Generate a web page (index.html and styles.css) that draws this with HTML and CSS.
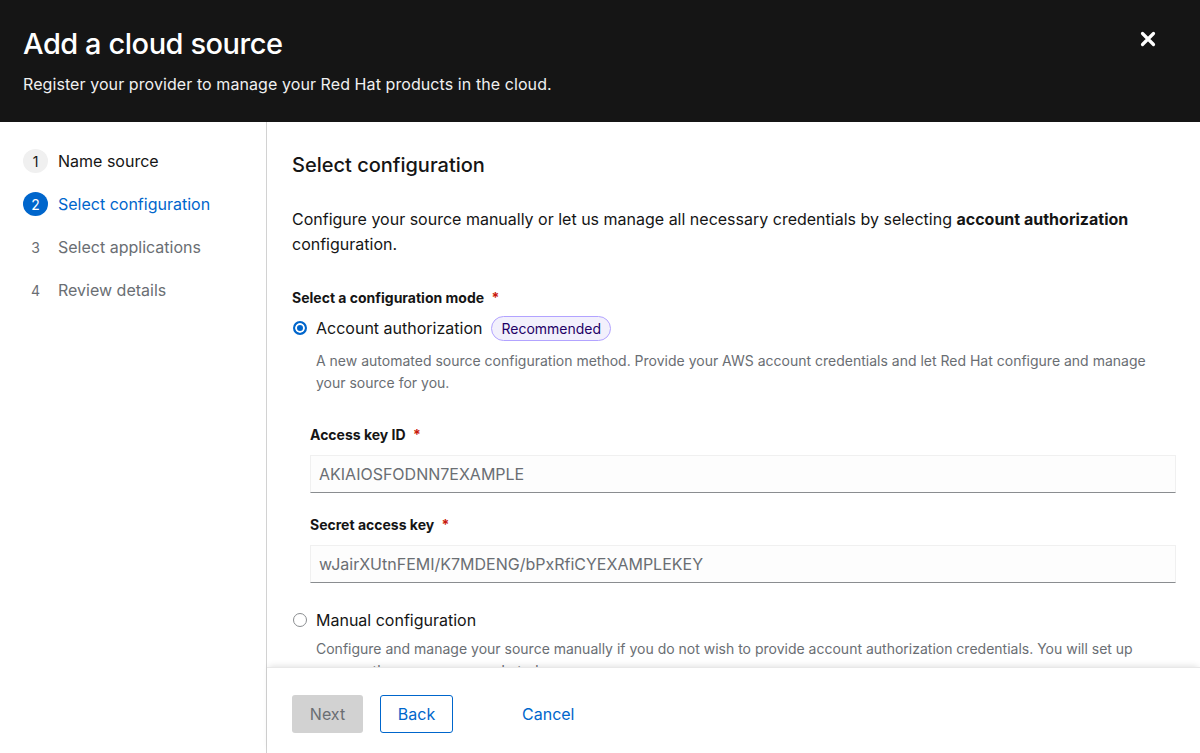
FILE: index.html
```html
<!DOCTYPE html>
<html lang="en">
<head>
<meta charset="utf-8">
<title>Add a cloud source</title>
<link rel="stylesheet" href="styles.css">
</head>
<body>
<div class="modal">
  <header class="modal-header">
    <div class="header-text">
      <h1 class="title">Add a cloud source</h1>
      <p class="subtitle">Register your provider to manage your Red Hat products in the cloud.</p>
    </div>
    <button class="close" aria-label="Close">
      <svg width="16" height="16" viewBox="0 0 16 16"><path d="M2.5 2.5 L13.5 13.5 M13.5 2.5 L2.5 13.5" stroke="#fff" stroke-width="3.2" stroke-linecap="round"/></svg>
    </button>
  </header>
  <div class="modal-body">
    <nav class="steps">
      <div class="step done"><span class="num">1</span><span class="label">Name source</span></div>
      <div class="step current"><span class="num">2</span><span class="label">Select configuration</span></div>
      <div class="step"><span class="num">3</span><span class="label">Select applications</span></div>
      <div class="step"><span class="num">4</span><span class="label">Review details</span></div>
    </nav>
    <div class="main">
      <div class="content">
        <h2 class="heading">Select configuration</h2>
        <p class="intro">Configure your source manually or let us manage all necessary credentials by selecting <b>account authorization</b> configuration.</p>
        <div class="group-label">Select a configuration mode <span class="req">*</span></div>
        <div class="radio-row">
          <span class="radio checked"></span>
          <span class="radio-label">Account authorization</span>
          <span class="badge">Recommended</span>
        </div>
        <p class="radio-desc">A new automated source configuration method. Provide your AWS account credentials and let Red Hat configure and manage your source for you.</p>
        <div class="fields">
          <div class="field-label">Access key ID <span class="req">*</span></div>
          <div class="input">AKIAIOSFODNN7EXAMPLE</div>
          <div class="field-label second">Secret access key <span class="req">*</span></div>
          <div class="input">wJairXUtnFEMI/K7MDENG/bPxRfiCYEXAMPLEKEY</div>
        </div>
        <div class="radio-row manual">
          <span class="radio"></span>
          <span class="radio-label">Manual configuration</span>
        </div>
        <p class="radio-desc">Configure and manage your source manually if you do not wish to provide account authorization credentials. You will set up sources the same way you do today.</p>
      </div>
      <footer class="footer">
        <button class="btn next">Next</button>
        <button class="btn back">Back</button>
        <button class="btn link">Cancel</button>
      </footer>
    </div>
  </div>
</div>
</body>
</html>
```

FILE: styles.css
```css
* { box-sizing: border-box; }
html, body { margin: 0; padding: 0; }
body {
  width: 1200px;
  height: 753px;
  overflow: hidden;
  font-family: "Inter", "Noto Sans", sans-serif;
  color: #151515;
  background: #fff;
}
.modal { display: flex; flex-direction: column; height: 753px; }
.modal-header {
  background: #151515;
  color: #fff;
  height: 122px;
  flex: none;
  display: flex;
  justify-content: space-between;
  align-items: flex-start;
  padding: 28px 44px 0 23px;
}
.title {
  margin: 0;
  font-size: 29px;
  font-weight: 500;
  line-height: 32px;
  letter-spacing: -0.45px;
}
.subtitle {
  margin: 13px 0 0;
  font-size: 16px;
  line-height: 22px;
  color: #f0f0f0;
  letter-spacing: 0.08px;
}
.close {
  background: none;
  border: 0;
  padding: 0;
  margin-top: 3px;
  width: 16px;
  height: 16px;
  display: flex;
}
.modal-body { flex: 1; display: flex; min-height: 0; }
.steps {
  width: 267px;
  flex: none;
  border-right: 1px solid #d2d2d2;
  padding: 27px 0 0 23px;
  display: flex;
  flex-direction: column;
  gap: 19px;
}
.step { display: flex; align-items: center; gap: 10px; font-size: 16px; color: #6a6e73; height: 24px; }
.step .num {
  width: 25px; height: 24px; border-radius: 50%;
  display: flex; align-items: center; justify-content: center;
  font-size: 14px; color: #6a6e73;
}
.step.done .num { background: #f0f0f0; color: #151515; }
.step.done .label { color: #151515; }
.step.current .num { background: #0066cc; color: #fff; }
.step.current .label { color: #0066cc; }
.main { flex: 1; display: flex; flex-direction: column; min-width: 0; }
.content {
  flex: 1;
  overflow: hidden;
  padding: 31px 24px 0 25px;
}
.heading { margin: 0; font-size: 20px; font-weight: 500; line-height: 24px; }
.intro { margin: 30px 0 0; font-size: 16px; line-height: 25px; }
.intro b { font-weight: 700; }
.group-label { margin-top: 31px; font-size: 14px; font-weight: 700; line-height: 20px; }
.req { color: #c9190b; margin-left: 4px; }
.radio-row { display: flex; align-items: center; height: 26px; margin-top: 7px; }
.radio {
  width: 14px; height: 14px; border-radius: 50%;
  border: 1px solid #8a8d90;
  margin: 0 9px 0 1px;
  flex: none;
  background: #fff;
}
.radio.checked { border: 2px solid #0066cc; box-shadow: inset 0 0 0 2px #fff; background: #0066cc; }
.radio-label { font-size: 16px; }
.badge {
  margin-left: 9px;
  font-size: 14px;
  color: #1f0066;
  background: #f2f0fc;
  border: 1px solid #b2a3ff;
  border-radius: 13px;
  padding: 0 9px;
  height: 25px;
  line-height: 23px;
}
.radio-desc { margin: 9px 0 0 24px; font-size: 14px; line-height: 22px; color: #6a6e73; }
.fields { padding: 31px 0 0 18px; }
.field-label { font-size: 14px; font-weight: 700; line-height: 20px; }
.field-label.second { margin-top: 22px; }
.input {
  margin-top: 10px;
  height: 38px;
  border: 1px solid #f0f0f0;
  border-bottom-color: #8a8d90;
  background: #fdfdfd;
  color: #6a6e73;
  font-size: 16px;
  line-height: 36px;
  padding: 0 8px;
}
.manual { margin-top: 24px; }
.manual + .radio-desc { margin-top: 5px; }
.footer {
  flex: none;
  height: 86px;
  border-top: 1px solid #e8e8e8;
  box-shadow: 0 -3px 6px -2px rgba(3,3,3,0.12);
  display: flex;
  align-items: flex-start;
  gap: 17px;
  padding: 27px 0 0 25px;
  position: relative;
  background: #fff;
}
.btn {
  font-family: inherit;
  font-size: 16px;
  height: 38px;
  border-radius: 3px;
  padding: 0 16px;
  border: 1px solid transparent;
  background: none;
  cursor: pointer;
}
.btn.next { background: #d2d2d2; color: #6a6e73; width: 71px; }
.btn.back { border-color: #0066cc; color: #0066cc; width: 73px; }
.btn.link { color: #0066cc; margin-left: 35px; }
```
